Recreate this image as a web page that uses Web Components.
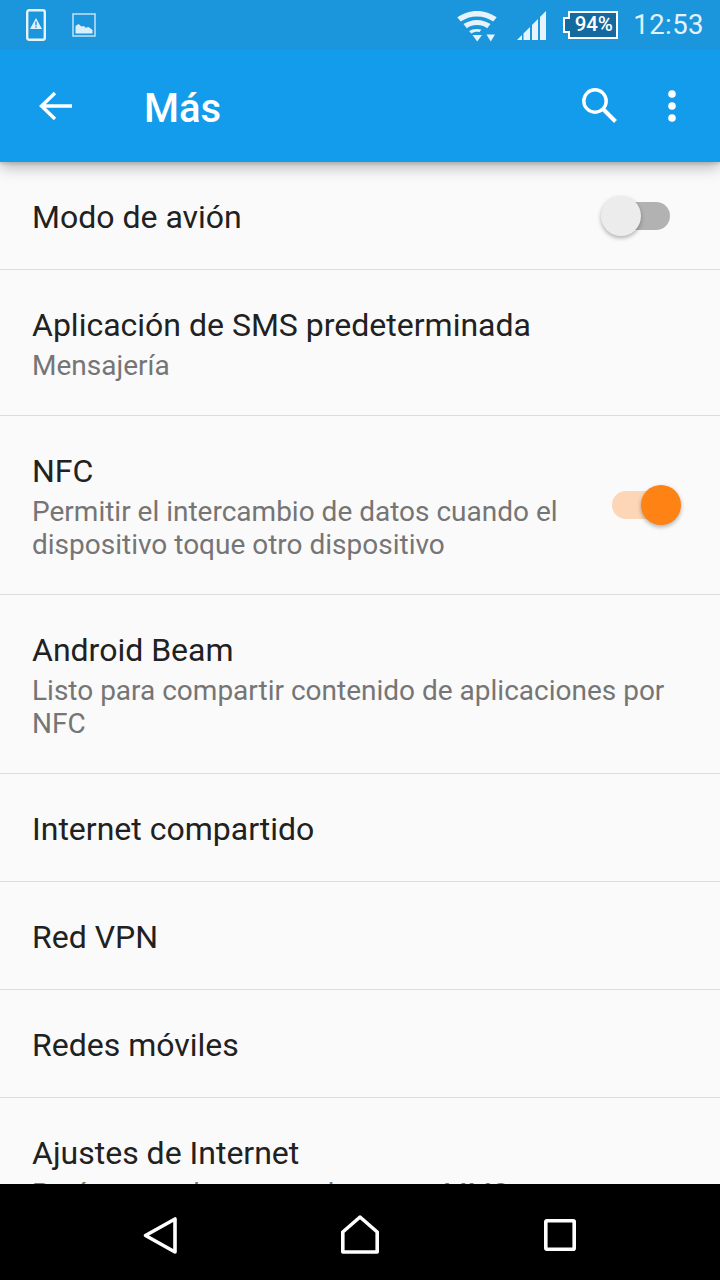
<!DOCTYPE html>
<html><head><meta charset="utf-8">
<style>
html,body{margin:0;padding:0;background:#fafafa}
body{width:720px;height:1280px;overflow:hidden;font-family:Roboto,"Noto Sans",sans-serif;display:flex;flex-direction:column}
</style></head>
<body>
<x-status></x-status>
<x-appbar title="Más"></x-appbar>
<x-list>
  <x-row h="107" title="Modo de avión" toggle="off"></x-row>
  <x-row h="145" title="Aplicación de SMS predeterminada" sub="Mensajería"></x-row>
  <x-row h="178" title="NFC" sub="Permitir el intercambio de datos cuando el dispositivo toque otro dispositivo" toggle="on"></x-row>
  <x-row h="178" title="Android Beam" sub="Listo para compartir contenido de aplicaciones por NFC"></x-row>
  <x-row h="107" title="Internet compartido"></x-row>
  <x-row h="107" title="Red VPN"></x-row>
  <x-row h="107" title="Redes móviles"></x-row>
  <x-row h="145" title="Ajustes de Internet" sub="Parámetros de acceso de correo MMS"></x-row>
</x-list>
<x-nav></x-nav>
<script>
function def(name,css,html){
  customElements.define(name,class extends HTMLElement{
    connectedCallback(){
      if(this.shadowRoot)return;
      const r=this.attachShadow({mode:'open'});
      r.innerHTML='<style>'+css+'</style>'+(typeof html==='function'?html(this):html);
    }
  });
}
def('x-status',`
:host{display:flex;align-items:center;height:50px;flex:none;background:#1b96dc;color:#fff;position:relative;z-index:3}
svg{display:block;flex:none}
.l1{margin-left:26px}.l2{margin-left:26px}
.sp{flex:1}
.time{font-size:27.5px;color:#e3f2fb;margin:0 16px 0 15px;letter-spacing:.45px;line-height:50px}
.bat{position:relative;width:56px;height:30px;margin:0 0 0 15px;flex:none}
.bat svg{position:absolute;inset:0}
.bat span{position:absolute;left:7px;right:0;top:0;height:30px;line-height:29px;text-align:center;font-size:20.500px;font-weight:500;color:#fff;letter-spacing:-.2px}
`,`
<svg class="l1" width="20" height="32" viewBox="0 0 20 32"><rect x="1.200" y="1.200" width="17.600" height="29.600" rx="2" fill="none" stroke="#e6f3fb" stroke-width="2.400"/><path d="M10 9 16 20H4z" fill="#e0f0fa"/><rect x="9.300" y="12.500" width="1.400" height="3.800" fill="#1b96dc"/><rect x="9.300" y="17.200" width="1.400" height="1.500" fill="#1b96dc"/></svg>
<svg class="l2" width="24" height="24" viewBox="0 0 24 24"><rect x="1" y="1" width="22" height="22" fill="none" stroke="#b9def3" stroke-width="1.600"/><path d="M3.500 20.500V13l3-2 3 2.500 2.500-.5 1.500 1.700 3-.7 4 3v3.500z" fill="#dceefa"/></svg>
<span class="sp"></span>
<svg style="margin-top:4px" width="40" height="32" viewBox="0 0 40 32"><path d="M20 0C12.500 0 6 2.500.3 6.300l3.400 4.300C8.500 7.400 14 5.500 20 5.500s11.500 1.900 16.300 5.100l3.400-4.300C34 2.500 27.500 0 20 0z" fill="#e6f3fb"/><path d="M6.500 13.100C10.400 10.500 14.900 8.900 20 8.900s9.600 1.600 13.500 4.200l-3.300 4.100C27.300 15.300 23.800 14.100 20 14.100s-7.300 1.200-10.200 3.100z" fill="#e6f3fb"/><path d="M12 20.200c2.300-1.400 5-2.300 8-2.300 1.500 0 3 .2 4.300.7l-1.700 2.300-.6.100c-.6-.1-1.300-.2-2-.2-2 0-3.900.6-5.500 1.700z" fill="#e6f3fb"/><path d="M15.500 24h9.500L20.200 30.500z" fill="#e6f3fb"/><path d="M29.500 23.500h8.500l-4.250 7z" fill="#e6f3fb"/></svg>
<svg style="margin-left:20px;margin-top:2px" width="30" height="30" viewBox="0 0 30 30"><path d="M0 29l5-5v5z" fill="#e6f3fb"/><path d="M6.500 22.500l6.500-6.500v13H6.500z" fill="#e6f3fb"/><path d="M15 14l6-6v21h-6z" fill="#e6f3fb"/><path d="M23 6 29 0v29h-6z" fill="#e6f3fb"/></svg>
<div class="bat"><svg width="56" height="30" viewBox="0 0 56 30"><path d="M7 2h48v26H7v-6H2V8h5z" fill="#14699f" stroke="#fff" stroke-width="2"/></svg><span>94%</span></div>
<span class="time">12:53</span>
`);
def('x-appbar',`
:host{display:flex;align-items:center;height:112px;flex:none;background:#149cec;position:relative;z-index:2;box-shadow:0 5px 14px rgba(0,0,0,.28),0 2px 3px rgba(0,0,0,.12)}
svg{display:block;flex:none}
h1{margin:0 0 0 70px;padding-top:6px;font-size:40px;font-weight:500;color:#fff;flex:1;line-height:106px;box-sizing:border-box}
.back{margin-left:38px}
.dots{margin:0 40px 0 46px}
`,el=>`
<svg class="back" width="36" height="32" viewBox="0 0 36 32"><path d="M34 16H4M17 3 3.500 16 17 29" fill="none" stroke="#fff" stroke-width="3.400"/></svg>
<h1>${el.getAttribute('title')}</h1>
<svg width="38" height="38" viewBox="0 0 38 38"><circle cx="15" cy="14" r="11.200" fill="none" stroke="#fff" stroke-width="3.400"/><path d="M23 22l12.500 12.500" fill="none" stroke="#fff" stroke-width="4"/></svg>
<svg class="dots" width="16" height="36" viewBox="0 0 16 36"><circle cx="8" cy="6" r="3.800" fill="#fff"/><circle cx="8" cy="18" r="3.800" fill="#fff"/><circle cx="8" cy="30" r="3.800" fill="#fff"/></svg>
`);
def('x-list',`
:host{display:flex;flex-direction:column;flex:1;min-height:0;overflow:hidden;background:#fafafa;position:relative;z-index:1}
`,`<slot></slot>`);
def('x-row',`
:host{display:flex;align-items:center;flex:none;box-sizing:border-box;border-bottom:1px solid #dcdcdc;padding:var(--pt) 32px 0;height:var(--h)}
.txt{flex:1;min-width:0}
.t{font-size:32px;line-height:40px;color:#212121}
.s{font-size:28px;line-height:33px;color:#757575;margin-top:4px}
x-switch{flex:none;margin:calc(0px - var(--pt)) 7px 0 0}
`,el=>{
 const h=+el.getAttribute('h');el.style.setProperty('--h',(h+1)+'px');
 const sub=el.getAttribute('sub'),tg=el.getAttribute('toggle');
 el.style.setProperty('--pt',sub?'1px':'2px');
 return `<div class="txt"><div class="t">${el.getAttribute('title')}</div>${sub?`<div class="s">${sub}</div>`:''}</div>${tg?`<x-switch state="${tg}"></x-switch>`:''}`;
});
def('x-switch',`
:host{display:block;width:80px;height:42px;position:relative}
.track{position:absolute;left:11px;top:7px;width:58px;height:28px;border-radius:14px;background:#b2b2b2}
.knob{position:absolute;left:0;top:1px;width:40px;height:40px;border-radius:50%;background:#ececec;box-shadow:0 2px 4px rgba(0,0,0,.3)}
:host([state=on]) .track{background:#fdd6b7}
:host([state=on]) .knob{background:#ff8214;left:40px}
`,`<div class="track"></div><div class="knob"></div>`);
def('x-nav',`
:host{display:flex;align-items:flex-start;height:96px;flex:none;background:#000;position:relative;z-index:3}
svg{display:block;flex:none}
`,`
<svg style="margin:32px 0 0 142px" width="36" height="40" viewBox="0 0 36 40"><path d="M33 3v33L3.500 19.500z" fill="none" stroke="#fff" stroke-width="3.600" stroke-linejoin="round"/></svg>
<svg style="margin:30px 0 0 161px" width="44" height="42" viewBox="0 0 44 42"><path d="M21 3 38.200 18V38H3.800V18z" fill="none" stroke="#fff" stroke-width="3.600" stroke-linejoin="round"/></svg>
<svg style="margin:33px 0 0 159px" width="36" height="36" viewBox="0 0 36 36"><rect x="3.800" y="3.800" width="28.400" height="28.400" rx="1" fill="none" stroke="#fff" stroke-width="3.600"/></svg>
`);
</script>
</body></html>
